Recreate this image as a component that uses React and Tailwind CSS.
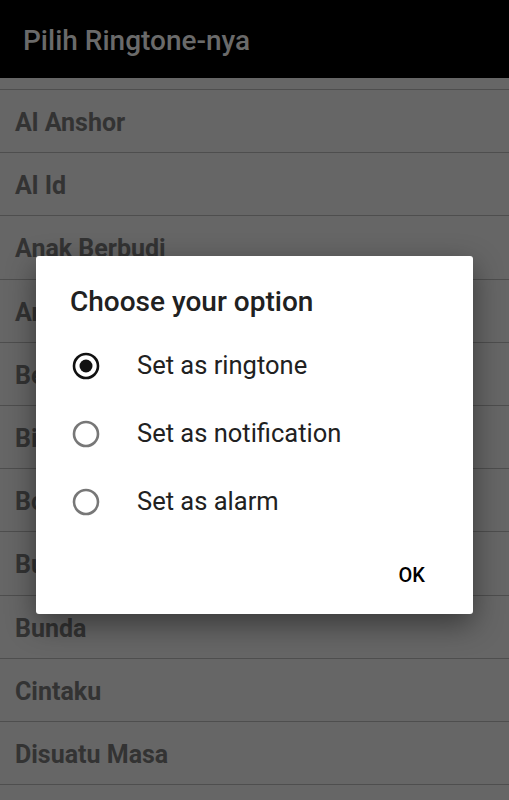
import React from 'react'

const songs = ['Al Anshor', 'Al Id', 'Anak Berbudi', 'Anak Sholeh', 'Bersyukur', 'Bismillah', 'Bocah', 'Burung', 'Bunda', 'Cintaku', 'Disuatu Masa']

function Radio({ checked }) {
  return (
    <svg width="30" height="30" viewBox="0 0 30 30">
      <circle cx="15" cy="15" r="12" fill="none" stroke={checked ? '#111' : '#777'} strokeWidth="2.6" />
      {checked && <circle cx="15" cy="15" r="6.5" fill="#111" />}
    </svg>
  )
}

export default function App() {
  const options = [
    { label: 'Set as ringtone', checked: true },
    { label: 'Set as notification', checked: false },
    { label: 'Set as alarm', checked: false },
  ]

  return (
    <div className="relative w-[509px] h-[800px] overflow-hidden bg-[#666]" style={{ fontFamily: 'Roboto, "Noto Sans", sans-serif' }}>
      {/* Toolbar */}
      <header className="h-[78px] bg-black flex items-center px-[23px]">
        <span className="text-[28px] font-medium text-[#6a6a6a] leading-none mt-[3px]">Pilih Ringtone-nya</span>
      </header>

      {/* List */}
      <div>
        <div className="h-[12px] border-b border-[#4e4e4e]" />
        {songs.map((s) => (
          <div key={s} className="h-[63.2px] border-b border-[#4e4e4e] flex items-center px-[15px]">
            <span className="text-[25px] font-bold text-[#333] leading-none mt-[3px]">{s}</span>
          </div>
        ))}
      </div>

      {/* Dialog */}
      <div className="absolute top-[256px] left-[36px] w-[437px] h-[358px] bg-white rounded-[3px] shadow-[0_10px_30px_rgba(0,0,0,0.45)] flex flex-col">
        <div className="pt-[30px] pl-[34px] h-[76px]">
          <span className="text-[28px] font-medium text-[#212121] leading-[32px]">Choose your option</span>
        </div>
        <div className="flex flex-col">
          {options.map((o) => (
            <div key={o.label} className="h-[68px] flex items-center pl-[35px]">
              <Radio checked={o.checked} />
              <span className="ml-[36px] text-[25.5px] text-[#212121] leading-none">{o.label}</span>
            </div>
          ))}
        </div>
        <div className="flex justify-end pr-[48px] pt-[29px]">
          <span className="text-[20px] font-medium text-black leading-none">OK</span>
        </div>
      </div>
    </div>
  )
}
